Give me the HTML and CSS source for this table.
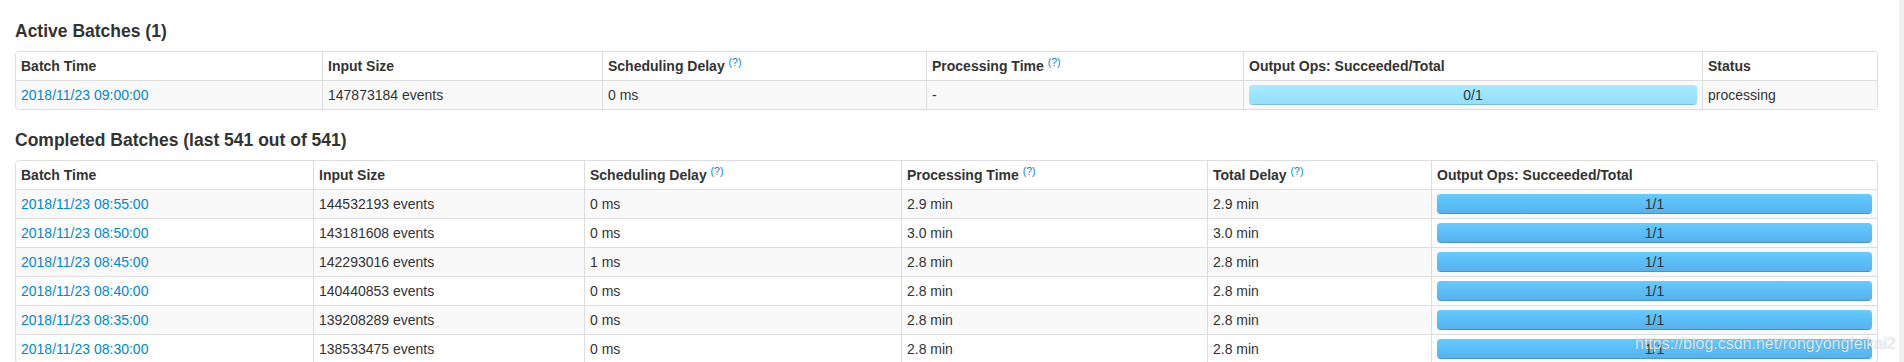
FILE: index.html
```html
<!DOCTYPE html>
<html>
<head>
<meta charset="utf-8">
<title>Streaming Batches</title>
<link rel="stylesheet" href="styles.css">
</head>
<body>
<div class="page">
  <main class="content">
    <h4 class="section-title">Active Batches (1)</h4>
    <table class="batches">
      <thead>
        <tr>
          <th class="a-c1">Batch Time</th>
          <th class="a-c2">Input Size</th>
          <th class="a-c3">Scheduling Delay <sup class="hint">(?)</sup></th>
          <th class="a-c4">Processing Time <sup class="hint">(?)</sup></th>
          <th class="a-c5">Output Ops: Succeeded/Total</th>
          <th class="a-c6">Status</th>
        </tr>
      </thead>
      <tbody>
        <tr>
          <td><a class="batch-link" href="#">2018/11/23 09:00:00</a></td>
          <td>147873184 events</td>
          <td>0 ms</td>
          <td>-</td>
          <td><div class="progress"><div class="bar started">0/1</div></div></td>
          <td>processing</td>
        </tr>
      </tbody>
    </table>

    <h4 class="section-title">Completed Batches (last 541 out of 541)</h4>
    <table class="batches">
      <thead>
        <tr>
          <th class="c-c1">Batch Time</th>
          <th class="c-c2">Input Size</th>
          <th class="c-c3">Scheduling Delay <sup class="hint">(?)</sup></th>
          <th class="c-c4">Processing Time <sup class="hint">(?)</sup></th>
          <th class="c-c5">Total Delay <sup class="hint">(?)</sup></th>
          <th class="c-c6">Output Ops: Succeeded/Total</th>
        </tr>
      </thead>
      <tbody>
        <tr>
          <td><a class="batch-link" href="#">2018/11/23 08:55:00</a></td>
          <td>144532193 events</td>
          <td>0 ms</td>
          <td>2.9 min</td>
          <td>2.9 min</td>
          <td><div class="progress"><div class="bar completed">1/1</div></div></td>
        </tr>
        <tr>
          <td><a class="batch-link" href="#">2018/11/23 08:50:00</a></td>
          <td>143181608 events</td>
          <td>0 ms</td>
          <td>3.0 min</td>
          <td>3.0 min</td>
          <td><div class="progress"><div class="bar completed">1/1</div></div></td>
        </tr>
        <tr>
          <td><a class="batch-link" href="#">2018/11/23 08:45:00</a></td>
          <td>142293016 events</td>
          <td>1 ms</td>
          <td>2.8 min</td>
          <td>2.8 min</td>
          <td><div class="progress"><div class="bar completed">1/1</div></div></td>
        </tr>
        <tr>
          <td><a class="batch-link" href="#">2018/11/23 08:40:00</a></td>
          <td>140440853 events</td>
          <td>0 ms</td>
          <td>2.8 min</td>
          <td>2.8 min</td>
          <td><div class="progress"><div class="bar completed">1/1</div></div></td>
        </tr>
        <tr>
          <td><a class="batch-link" href="#">2018/11/23 08:35:00</a></td>
          <td>139208289 events</td>
          <td>0 ms</td>
          <td>2.8 min</td>
          <td>2.8 min</td>
          <td><div class="progress"><div class="bar completed">1/1</div></div></td>
        </tr>
        <tr>
          <td><a class="batch-link" href="#">2018/11/23 08:30:00</a></td>
          <td>138533475 events</td>
          <td>0 ms</td>
          <td>2.8 min</td>
          <td>2.8 min</td>
          <td><div class="progress"><div class="bar completed">1/1</div></div></td>
        </tr>
      </tbody>
    </table>
  </main>
  <div class="scrollbar"></div>
</div>
<div class="watermark">https://blog.csdn.net/rongyongfeikai2</div>
</body>
</html>
```

FILE: styles.css
```css
html, body {
  margin: 0;
  height: 100%;
  overflow: hidden;
  background: #fff;
}

body {
  font-family: "Liberation Sans", Arial, Helvetica, sans-serif;
  font-size: 14px;
  line-height: 20px;
  color: #333;
  position: relative;
}

.page {
  display: flex;
  height: 100%;
}

.content {
  flex: 1;
  min-width: 0;
  padding: 11px 0 0 15px;
}

.scrollbar {
  width: 5px;
  background: #f0f0f0;
}

.section-title {
  margin: 10px 0;
  font-size: 17.5px;
  line-height: 20px;
  font-weight: bold;
  color: #333;
}

.batches {
  width: 1863px;
  table-layout: fixed;
  border-collapse: separate;
  border-spacing: 0;
  border: 1px solid #ddd;
  border-radius: 4px;
  margin: 0 0 20px 0;
}

.batches th,
.batches td {
  box-sizing: border-box;
  padding: 4px 5px;
  text-align: left;
  vertical-align: top;
  border-left: 1px solid #ddd;
  border-top: 1px solid #ddd;
  white-space: nowrap;
  overflow: hidden;
}

.batches th {
  border-top: 0;
  font-weight: bold;
  background: #fff;
}

.batches th:first-child,
.batches td:first-child {
  border-left: 0;
}

.batches tbody tr:nth-child(odd) td {
  background: #f9f9f9;
}

.batches thead tr:first-child th:first-child { border-top-left-radius: 4px; }
.batches thead tr:first-child th:last-child { border-top-right-radius: 4px; }
.batches tbody tr:last-child td:first-child { border-bottom-left-radius: 4px; }
.batches tbody tr:last-child td:last-child { border-bottom-right-radius: 4px; }

/* Active batches column widths */
.a-c1 { width: 306px; }
.a-c2 { width: 280px; }
.a-c3 { width: 324px; }
.a-c4 { width: 317px; }
.a-c5 { width: 459px; }
.a-c6 { width: 175px; }

/* Completed batches column widths */
.c-c1 { width: 297px; }
.c-c2 { width: 271px; }
.c-c3 { width: 317px; }
.c-c4 { width: 306px; }
.c-c5 { width: 224px; }
.c-c6 { width: 446px; }

.hint {
  position: relative;
  top: -0.5em;
  font-size: 75%;
  line-height: 0;
  vertical-align: baseline;
  font-weight: normal;
  color: #0088cc;
}

.batch-link {
  color: #0088cc;
  text-decoration: none;
}

.progress {
  height: 20px;
  border-radius: 4px;
  overflow: hidden;
  background: linear-gradient(#f5f5f5, #f9f9f9);
  box-shadow: inset 0 1px 2px rgba(0, 0, 0, 0.1);
}

.bar {
  height: 100%;
  text-align: center;
  color: #333;
  line-height: 20px;
  box-shadow: inset 0 -1px 0 rgba(0, 0, 0, 0.15);
}

.bar.started {
  background: linear-gradient(#a4edff, #94ddff);
}

.bar.completed {
  background: linear-gradient(#64cbff, #54b0ee);
}

.watermark {
  position: absolute;
  left: 1635px;
  top: 335px;
  font-family: "Liberation Sans", Arial, sans-serif;
  font-size: 16px;
  line-height: 18px;
  color: rgba(255, 255, 255, 0.85);
  text-shadow: 0 0 1px rgba(0, 0, 0, 0.35);
  white-space: nowrap;
  pointer-events: none;
}
```
